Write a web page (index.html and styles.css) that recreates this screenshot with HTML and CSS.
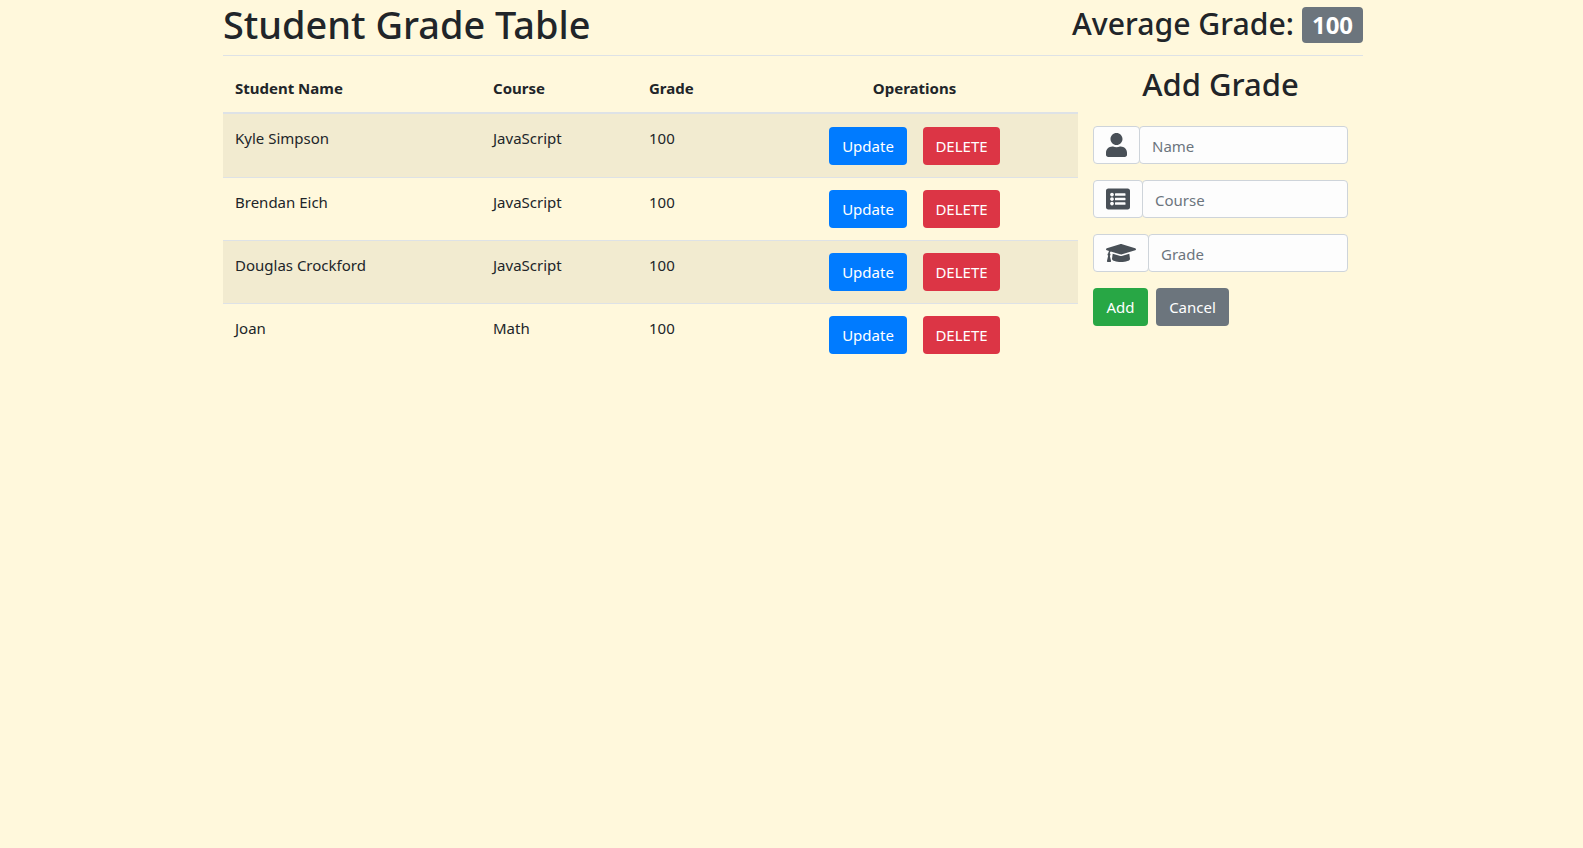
FILE: index.html
```html
<!DOCTYPE html>
<html lang="en">
<head>
<meta charset="utf-8">
<title>Student Grade Table</title>
<link rel="stylesheet" href="styles.css">
</head>
<body>
<div class="container">
  <header class="page-header">
    <h1 class="title">Student Grade Table</h1>
    <h2 class="average">Average Grade:<span class="badge">100</span></h2>
  </header>
  <div class="content">
    <table class="grades">
      <colgroup>
        <col class="col-name"><col class="col-course"><col class="col-grade"><col class="col-ops">
      </colgroup>
      <thead>
        <tr><th>Student Name</th><th>Course</th><th>Grade</th><th class="ops">Operations</th></tr>
      </thead>
      <tbody>
        <tr><td>Kyle Simpson</td><td>JavaScript</td><td>100</td><td class="ops"><button class="btn btn-blue">Update</button><button class="btn btn-red">DELETE</button></td></tr>
        <tr><td>Brendan Eich</td><td>JavaScript</td><td>100</td><td class="ops"><button class="btn btn-blue">Update</button><button class="btn btn-red">DELETE</button></td></tr>
        <tr><td>Douglas Crockford</td><td>JavaScript</td><td>100</td><td class="ops"><button class="btn btn-blue">Update</button><button class="btn btn-red">DELETE</button></td></tr>
        <tr><td>Joan</td><td>Math</td><td>100</td><td class="ops"><button class="btn btn-blue">Update</button><button class="btn btn-red">DELETE</button></td></tr>
      </tbody>
    </table>
    <aside class="side">
      <h2 class="add-title">Add Grade</h2>
      <div class="field">
        <span class="prepend"><svg class="icon" width="21" height="24" viewBox="0 0 448 512"><path d="M224 256c70.7 0 128-57.3 128-128S294.7 0 224 0 96 57.3 96 128s57.3 128 128 128zm89.6 32h-16.7c-22.2 10.2-46.9 16-72.9 16s-50.6-5.8-72.9-16h-16.7C60.2 288 0 348.2 0 422.4V464c0 26.5 21.5 48 48 48h352c26.5 0 48-21.5 48-48v-41.6c0-74.2-60.2-134.4-134.4-134.4z"/></svg></span>
        <input class="input" type="text" placeholder="Name">
      </div>
      <div class="field">
        <span class="prepend"><svg class="icon" width="24" height="24" viewBox="0 0 512 512"><path d="M464 480H48c-26.51 0-48-21.49-48-48V80c0-26.51 21.49-48 48-48h416c26.51 0 48 21.49 48 48v352c0 26.51-21.49 48-48 48zM128 120c-22.091 0-40 17.909-40 40s17.909 40 40 40 40-17.909 40-40-17.909-40-40-40zm0 96c-22.091 0-40 17.909-40 40s17.909 40 40 40 40-17.909 40-40-17.909-40-40-40zm0 96c-22.091 0-40 17.909-40 40s17.909 40 40 40 40-17.909 40-40-17.909-40-40-40zm288-136v-32c0-6.627-5.373-12-12-12H204c-6.627 0-12 5.373-12 12v32c0 6.627 5.373 12 12 12h200c6.627 0 12-5.373 12-12zm0 96v-32c0-6.627-5.373-12-12-12H204c-6.627 0-12 5.373-12 12v32c0 6.627 5.373 12 12 12h200c6.627 0 12-5.373 12-12zm0 96v-32c0-6.627-5.373-12-12-12H204c-6.627 0-12 5.373-12 12v32c0 6.627 5.373 12 12 12h200c6.627 0 12-5.373 12-12z"/></svg></span>
        <input class="input" type="text" placeholder="Course">
      </div>
      <div class="field">
        <span class="prepend"><svg class="icon" width="30" height="24" viewBox="0 0 640 512"><path d="M622.34 153.2L343.4 67.5c-15.2-4.67-31.6-4.67-46.79 0L17.66 153.2c-23.54 7.23-23.54 38.36 0 45.59l48.63 14.94c-10.67 13.19-17.23 29.28-17.88 46.9C38.78 266.15 32 276.11 32 288c0 10.78 5.68 19.85 13.86 25.65L20.33 428.53C18.11 438.52 25.71 448 35.94 448h56.11c10.24 0 17.84-9.48 15.62-19.47L82.14 313.65C90.32 307.85 96 298.78 96 288c0-11.57-6.47-21.25-15.66-26.87.76-15.02 8.44-28.3 20.69-36.72L296.6 284.5c9.06 2.78 26.44 6.25 46.79 0l278.95-85.7c23.55-7.24 23.55-38.36 0-45.6zM352.79 315.09c-28.53 8.76-52.84 3.92-65.59 0l-145.02-44.55L128 384c0 35.35 85.96 64 192 64s192-28.65 192-64l-14.18-113.47-145.03 44.56z"/></svg></span>
        <input class="input" type="text" placeholder="Grade">
      </div>
      <div class="actions">
        <button class="btn btn-green">Add</button>
        <button class="btn btn-gray">Cancel</button>
      </div>
    </aside>
  </div>
</div>
</body>
</html>
```
FILE: styles.css
```css
* { box-sizing: border-box; }
html, body { margin: 0; height: 100%; }
body {
  background: #fff8dc;
  color: #212529;
  font-family: "Noto Sans", "Open Sans", sans-serif;
  font-size: 15px;
  line-height: 24px;
}
.container { width: 1140px; margin-left: 223px; }
.page-header {
  display: flex;
  justify-content: space-between;
  align-items: flex-start;
  height: 56px;
  border-bottom: 1px solid #dee2e6;
}
.title { margin: 0; font-size: 37.9px; font-weight: 500; line-height: 48px; }
.average { margin: 7px 0 0; font-size: 30.2px; font-weight: 500; line-height: 34px; display: flex; align-items: flex-start; gap: 8px; }
.badge {
  display: block;
  width: 61px;
  height: 36px;
  background: #6c757d;
  color: #fff;
  border-radius: 4px;
  font-size: 24px;
  font-weight: 700;
  line-height: 36px;
  text-align: center;
}
.content { display: flex; align-items: flex-start; }
.grades { width: 855px; flex: none; border-collapse: separate; border-spacing: 0; table-layout: fixed; }
.col-name { width: 258px; }
.col-course { width: 156px; }
.col-grade { width: 114px; }
.col-ops { width: 327px; }
.grades th {
  height: 58px;
  padding: 16px 12px 8px;
  text-align: left;
  font-weight: 700;
  vertical-align: middle;
  border-bottom: 2px solid #dee2e6;
}
.grades td {
  height: 63px;
  padding: 12px;
  vertical-align: top;
  border-top: 1px solid #dee2e6;
}
.grades tbody tr:first-child td { border-top: 0; }
.grades tbody tr:first-child .ops { padding-top: 13px; }
.grades tbody tr:nth-child(odd) { background: rgba(0, 0, 0, .05); }
.grades .ops { text-align: center; }
.btn {
  display: inline-block;
  height: 38px;
  padding: 0;
  border: 0;
  border-radius: 4px;
  color: #fff;
  font: inherit;
  font-size: 15px;
  line-height: 38px;
  vertical-align: top;
}
.btn-blue { background: #007bff; width: 78px; margin-right: 16px; }
.btn-red { background: #dc3545; width: 77px; }
.btn-green { background: #28a745; width: 55px; }
.btn-gray { background: #6c757d; width: 73px; margin-left: 8px; }
.side { width: 285px; flex: none; padding: 0 15px; }
.add-title { margin: 7px 0 21px; height: 42px; text-align: center; font-size: 31px; font-weight: 500; line-height: 42px; }
.field { display: flex; height: 38px; margin-bottom: 16px; }
.prepend {
  display: flex;
  align-items: center;
  padding: 0 12px;
  border: 1px solid #ced4da;
  border-radius: 4px;
  background: #fdfdfd;
  margin-right: -1px;
}
.icon { display: block; fill: #495057; }
.input {
  flex: 1;
  min-width: 0;
  height: 38px;
  padding: 2px 12px 0;
  border: 1px solid #ced4da;
  border-radius: 4px;
  background: #fdfdfd;
  color: #495057;
  font: inherit;
}
.input::placeholder { color: #6c757d; opacity: 1; }
.actions { display: flex; }
```
